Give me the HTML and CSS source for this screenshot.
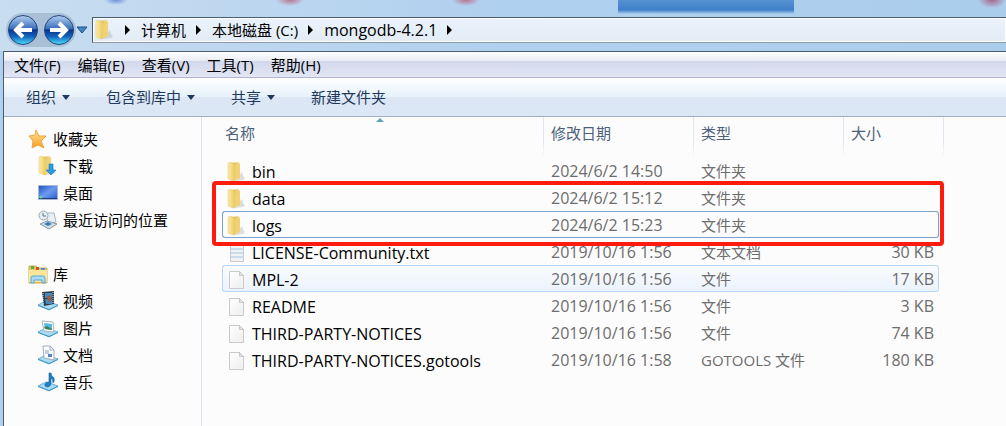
FILE: index.html
```html
<!DOCTYPE html>
<html lang="zh-CN">
	<head>
		<meta charset="UTF-8">
		<link rel="stylesheet" href="styles.css">
		<title>mongodb-4.2.1</title>
	</head>
	<body>
		<!-- shared icons -->
		<svg class="defs" width="0" height="0">
			<defs>
				<linearGradient id="gold" x1="0" x2="1"><stop offset="0" stop-color="#fbeaa8"/><stop offset="1" stop-color="#ebc95f"/></linearGradient>
				<linearGradient id="gold-dark" x1="0" x2="1"><stop offset="0" stop-color="#d6a93a"/><stop offset="1" stop-color="#f6dd88"/></linearGradient>
				<linearGradient id="paper" x2="1" y2="1"><stop offset="0" stop-color="#fff"/><stop offset="1" stop-color="#eee"/></linearGradient>
				<linearGradient id="orb" x2="0" y2="1"><stop offset="0" stop-color="#b4cfee"/><stop offset=".45" stop-color="#3a6fbd"/><stop offset=".5" stop-color="#0a3291"/><stop offset=".72" stop-color="#1263ba"/><stop offset="1" stop-color="#4fe0fb"/></linearGradient>
				<linearGradient id="screen" x2="1" y2="1"><stop offset="0" stop-color="#1d4fc0"/><stop offset=".5" stop-color="#6c9af0"/><stop offset="1" stop-color="#2458c8"/></linearGradient>
				<linearGradient id="starfill" x2="0" y2="1"><stop offset="0" stop-color="#ffe69a"/><stop offset="1" stop-color="#f99d1e"/></linearGradient>
			</defs>
			<symbol id="folder" viewBox="0 0 20 20">
				<path d="M11 15l4-5 1 4 2 2-2 2-8 1z" fill="#bdbdbd" opacity=".5"/>
				<path d="M4 1l8-1v15l-5 3z" fill="url(#gold-dark)"/>
				<path d="M8 5l5-4v15l-5 2z" fill="#f0d274"/>
				<path d="M1 1l3-1 4 3v16l-2 0-5-2z" fill="url(#gold)" stroke="#e5cc78" stroke-width=".5"/>
			</symbol>
			<symbol id="file" viewBox="0 0 20 20">
				<path d="M2.500 1.500h10l4 4v13h-14z" fill="url(#paper)" stroke="#cacaca"/>
				<path d="M12.500 1.500v4h4z" fill="#e4e4e4" stroke="#bbb" stroke-width=".7"/>
			</symbol>
			<symbol id="text-file" viewBox="0 0 20 20">
				<path d="M3.500 1.500h13v17h-13z" fill="#f0f2f4" stroke="#c8ccd0"/>
				<path d="M4 6h12M4 10h12M4 14h12" stroke="#c9dcea" stroke-width="2"/>
			</symbol>
			<symbol id="tray" viewBox="0 0 20 20">
				<path d="M0 14l8-4 12 4-9 5z" fill="#a9dbf2" stroke="#69b4da"/>
				<path d="M0 14l11 4 9-4v1l-9 4-11-4z" fill="#3c95c6"/>
			</symbol>
		</svg>

		<div class="titlebar">
			<div class="nav">
				<button class="orb" aria-label="后退"><svg viewBox="0 0 32 32"><circle cx="16" cy="16" r="14.500" fill="url(#orb)" stroke="#23467f"/><path d="M25 16H10M16 9l-7 7 7 7" fill="none" stroke="#fff" stroke-width="4"/></svg></button>
				<button class="orb" aria-label="前进"><svg viewBox="0 0 32 32"><circle cx="16" cy="16" r="14.500" fill="url(#orb)" stroke="#23467f"/><path d="M7 16h15M16 9l7 7-7 7" fill="none" stroke="#fff" stroke-width="4"/></svg></button>
			</div>
			<button class="history" aria-label="最近浏览"><svg viewBox="0 0 12 8"><path d="M1 1h10L6 7z" fill="#3f87c5" stroke="#1e4f86"/></svg></button>
			<nav class="address">
				<svg class="icon"><use href="#folder"/></svg>
				<i class="crumb"></i><a href="#">计算机</a>
				<i class="crumb"></i><a href="#">本地磁盘 (C:)</a>
				<i class="crumb"></i><a href="#" class="latin">mongodb-4.2.1</a>
				<i class="crumb"></i>
			</nav>
		</div>

		<div class="window">
			<div class="menubar">
				<button>文件(F)</button>
				<button>编辑(E)</button>
				<button>查看(V)</button>
				<button>工具(T)</button>
				<button>帮助(H)</button>
			</div>
			<div class="toolbar">
				<button class="drop">组织</button>
				<button class="drop">包含到库中</button>
				<button class="drop">共享</button>
				<button>新建文件夹</button>
			</div>

			<div class="main">
				<aside class="sidebar">
					<ul>
						<li class="group"><svg class="icon" viewBox="0 0 20 20"><path d="M8 1l3 6 7 0-5 5 3 7-6-3-6 3 1-7-4-5 6-1z" fill="url(#starfill)" stroke="#eda742"/></svg><a href="#">收藏夹</a></li>
						<li><svg class="icon" viewBox="0 0 20 20"><use href="#folder"/><path d="M11 8h4v6h3l-5 5-5-5h3z" fill="#2b9be0" stroke="#1c78bd" stroke-width=".6"/></svg><a href="#">下载</a></li>
						<li><svg class="icon" viewBox="0 0 20 20"><path d="M.500 2.500h19v14H.500z" fill="url(#screen)" stroke="#a9b8cf"/><path d="M1 15h18v1H1z" fill="#183a7c"/><circle cx="3" cy="14" r="1.500" fill="#5ed39b"/></svg><a href="#">桌面</a></li>
						<li><svg class="icon" viewBox="0 0 20 20"><path d="M8 3h8l2 9-8 2z" fill="#e8f0f5" stroke="#a8b4bc"/><path d="M2 14l7-3 10 3-8 5z" fill="#d5dde2" stroke="#8c979f"/><path d="M6 14l4-2 4 2-4 2z" fill="#2e7cba"/><circle cx="5.500" cy="5.500" r="4.500" fill="#e5edf2" stroke="#9aabb6"/><path d="M5 3v3h3" fill="none" stroke="#5c7587"/></svg><a href="#">最近访问的位置</a></li>
					</ul>
					<ul>
						<li class="group"><svg class="icon" viewBox="0 0 20 20"><path d="M1 2h7l1 2h10v15H1z" fill="#eac65a" stroke="#d4ad4a"/><path d="M3 2h3v3H3z" fill="#46b44a"/><path d="M8 3h3v3H8z" fill="#d94b35"/><path d="M13 4h4v3h-4z" fill="#4a96d8"/><path d="M1 6h18v12H1z" fill="#fbe69c"/><path d="M3 19v-5q0-2 2-2h10q2 0 2 2v5h-3v-3H6v3z" fill="#a9dcf3" stroke="#55a9d4"/></svg><a href="#">库</a></li>
						<li><svg class="icon" viewBox="0 0 20 20"><use href="#tray"/><path d="M4 1l12-1v13l-10 2z" fill="#303c48"/><path d="M7 2h7v5H7zM7 8h7v5H8z" fill="#3f8cc7"/><path d="M9 5l4-1v7l-3-1z" fill="#a25d3a"/><path d="M5 2v12M15 1v12" stroke="#dce5eb" stroke-dasharray="1"/></svg><a href="#">视频</a></li>
						<li><svg class="icon" viewBox="0 0 20 20"><use href="#tray"/><path d="M4 3l11 1 1 10-10-1z" fill="#fff" stroke="#a9b5bd"/><path d="M6 5l8 1v6l-7-1z" fill="#58b6e8"/><path d="M6 9l3-1 5 3v1l-7-1z" fill="#3b8558"/></svg><a href="#">图片</a></li>
						<li><svg class="icon" viewBox="0 0 20 20"><use href="#tray"/><path d="M5 1h7l4 4v10L6 13z" fill="#fafcff" stroke="#a1acb9"/><path d="M12 1v4h4" fill="none" stroke="#a1acb9"/><path d="M7 6h4M7 8h4" stroke="#8ba5bb"/><path d="M10 9h4v3h-4z" fill="#5485c5"/></svg><a href="#">文档</a></li>
						<li><svg class="icon" viewBox="0 0 20 20"><use href="#tray"/><path d="M11 1h2q0 3 3 5 1 3-1 5 0-4-2-5v6q-1 3-4 3-3-1-2-3 1-2 4-2z" fill="#1e80c6" stroke="#135f9e" stroke-width=".6"/></svg><a href="#">音乐</a></li>
					</ul>
				</aside>

				<div class="content">
					<table class="files">
						<colgroup><col class="c-name"><col class="c-date"><col class="c-type"><col class="c-size"><col class="c-edge"></colgroup>
						<thead>
							<tr><th class="sorted">名称</th><th>修改日期</th><th>类型</th><th colspan="2">大小</th></tr>
						</thead>
						<tbody>
							<tr><td><svg class="icon"><use href="#folder"/></svg>bin</td><td class="latin">2024/6/2 14:50</td><td>文件夹</td><td></td></tr>
							<tr><td><svg class="icon"><use href="#folder"/></svg>data<span class="mark"></span></td><td class="latin">2024/6/2 15:12</td><td>文件夹</td><td></td></tr>
							<tr class="focused"><td><svg class="icon"><use href="#folder"/></svg>logs</td><td class="latin">2024/6/2 15:23</td><td>文件夹</td><td></td></tr>
							<tr><td><svg class="icon"><use href="#text-file"/></svg>LICENSE-Community.txt</td><td class="latin">2019/10/16 1:56</td><td>文本文档</td><td class="latin">30 KB</td></tr>
							<tr class="hover"><td><svg class="icon"><use href="#file"/></svg>MPL-2</td><td class="latin">2019/10/16 1:56</td><td>文件</td><td class="latin">17 KB</td></tr>
							<tr><td><svg class="icon"><use href="#file"/></svg>README</td><td class="latin">2019/10/16 1:56</td><td>文件</td><td class="latin">3 KB</td></tr>
							<tr><td><svg class="icon"><use href="#file"/></svg>THIRD-PARTY-NOTICES</td><td class="latin">2019/10/16 1:56</td><td>文件</td><td class="latin">74 KB</td></tr>
							<tr><td><svg class="icon"><use href="#file"/></svg>THIRD-PARTY-NOTICES.gotools</td><td class="latin">2019/10/16 1:58</td><td>GOTOOLS 文件</td><td class="latin">180 KB</td></tr>
						</tbody>
					</table>
				</div>
			</div>
		</div>
	</body>
</html>
```
FILE: styles.css
```css
* {
	box-sizing: border-box;
}
body {
	display: flex;
	flex-direction: column;
	min-height: 100vh;
	margin: 0;
	background: #b0d0ef;
	font: 15px/20px 'Open Sans', 'Noto Sans CJK SC', sans-serif;
	color: #000;
}
button {
	padding: 0;
	border: 0;
	background: none;
	font: inherit;
	color: inherit;
}
a {
	color: inherit;
	text-decoration: none;
}
ul {
	margin: 0;
	padding: 0;
	list-style: none;
}
.defs {
	position: absolute;
}
.icon {
	flex: none;
	width: 20px;
	height: 20px;
}
.latin {
	font-size: 16px;
}

/* title bar */
.titlebar {
	display: flex;
	align-items: center;
	height: 51px;
	padding: 9px 0 0 6px;
	background:
		linear-gradient(#5793d2, #3f7fc9 10px, transparent) 618px 0 / 176px 14px no-repeat,
		radial-gradient(12px 5px at 116px 0, #6e8edb, transparent),
		radial-gradient(14px 6px at 290px 0, #b9748f, transparent),
		radial-gradient(14px 6px at 466px 0, #b9748f, transparent),
		radial-gradient(14px 8px at 992px 0, #a8648a, transparent),
		linear-gradient(90deg, #c9ddf0, #b0d0ef 50%, #abcdec);
}
.nav {
	display: flex;
	gap: 4px;
	padding: 1px;
	border-radius: 18px;
	background: #a9bfd6;
}
.orb,
.orb svg {
	display: block;
	width: 32px;
	height: 32px;
}
.history {
	width: 12px;
	margin-right: 4px;
}
.history svg {
	display: block;
}
.address {
	display: flex;
	flex: 1;
	align-items: center;
	height: 26px;
	padding-left: 2px;
	border: 1px solid #4c5c6e;
	border-right: 0;
	border-bottom-color: #8e9aa8;
	background: linear-gradient(#eaf2fc, #e3ebf4);
	box-shadow: inset 0 0 0 1px #fff;
}
.crumb {
	margin: 0 11px 0 10px;
	border: 5px solid transparent;
	border-left-color: #000;
	border-right: 0;
}

/* window frame */
.window {
	display: flex;
	flex: 1;
	flex-direction: column;
	margin-left: 3px;
	border-top: 1px solid #4c5c6e;
	border-left: 1px solid #4c5c6e;
	background: #fcfcfc;
}
.menubar {
	display: flex;
	gap: 17px;
	height: 26px;
	padding-left: 10px;
	border-bottom: 1px solid #b1b7d0;
	background: linear-gradient(#fff, #e8ebf4 9px, #d2d8eb 9px, #e2e6f5);
}
.toolbar {
	display: flex;
	gap: 36px;
	height: 39px;
	padding-left: 22px;
	border-bottom: 1px solid #a0afc3;
	background: linear-gradient(#fff, #e6f1fa 19px, #dce6f4 19px, #dce7f5);
	color: #1e395b;
}
.drop::after {
	display: inline-block;
	margin-left: 6px;
	border: 4px solid transparent;
	border-top: 5px solid #1e395b;
	border-bottom: 0;
	vertical-align: 3px;
	content: '';
}

.main {
	display: flex;
	flex: 1;
}
.sidebar {
	display: flex;
	flex: none;
	flex-direction: column;
	gap: 27px;
	width: 198px;
	padding: 8px 0 0 24px;
	border-right: 1px solid #d9e3f1;
}
.sidebar li {
	display: flex;
	align-items: center;
	gap: 5px;
	height: 27px;
	padding-left: 10px;
}
.sidebar .group {
	padding-left: 0;
}

/* file list */
.content {
	flex: 1;
	padding-left: 20px;
}
.files {
	width: 722px;
	border-spacing: 0;
	table-layout: fixed;
}
.c-name {
	width: 322px;
}
.c-date,
.c-type {
	width: 150px;
}
.c-edge {
	width: 5px;
}
.files th {
	position: relative;
	height: 40px;
	padding: 0 0 8px 7px;
	border-right: 1px solid;
	border-image: linear-gradient(#dfe6f1 60%, transparent) 1;
	font-weight: normal;
	text-align: left;
	color: #4c607a;
}
.files th:first-child {
	padding-left: 3px;
}
.sorted::after {
	position: absolute;
	top: 1px;
	left: 48%;
	border: 4px solid transparent;
	border-top: 0;
	border-bottom-color: #5aa3c0;
	content: '';
}
.files td {
	height: 27px;
	padding: 0 7px;
	border: 1px solid transparent;
	border-width: 1px 0;
	color: #6d6d6d;
}
.files td.latin {
	padding-top: 1px;
}
.files td:first-child {
	position: relative;
	padding: 2px 0 0 4px;
	border-left-width: 1px;
	font-size: 16px;
	color: #000;
}
.files td:last-child {
	padding-right: 4px;
	border-right-width: 1px;
	text-align: right;
}
.files .icon {
	margin-right: 5px;
	vertical-align: -4px;
}
.files .focused td {
	border-color: #7da2ce transparent;
}
.files .hover td {
	border-color: #b8d6fb transparent;
	background: linear-gradient(#fafbfd, #ebf3fd);
}
.files .focused td:first-child {
	border-left-color: #7da2ce;
	border-radius: 3px 0 0 3px;
}
.files .focused td:last-child {
	border-right-color: #7da2ce;
	border-radius: 0 3px 3px 0;
}
.files .hover td:first-child {
	border-left-color: #b8d6fb;
	border-radius: 3px 0 0 3px;
}
.files .hover td:last-child {
	border-right-color: #b8d6fb;
	border-radius: 0 3px 3px 0;
}

/* red frame round data and logs */
.mark {
	position: absolute;
	z-index: 1;
	top: -4px;
	left: -11px;
	width: 732px;
	height: 65px;
	border: 4px solid #ff1c0e;
	border-radius: 4px;
}
```
